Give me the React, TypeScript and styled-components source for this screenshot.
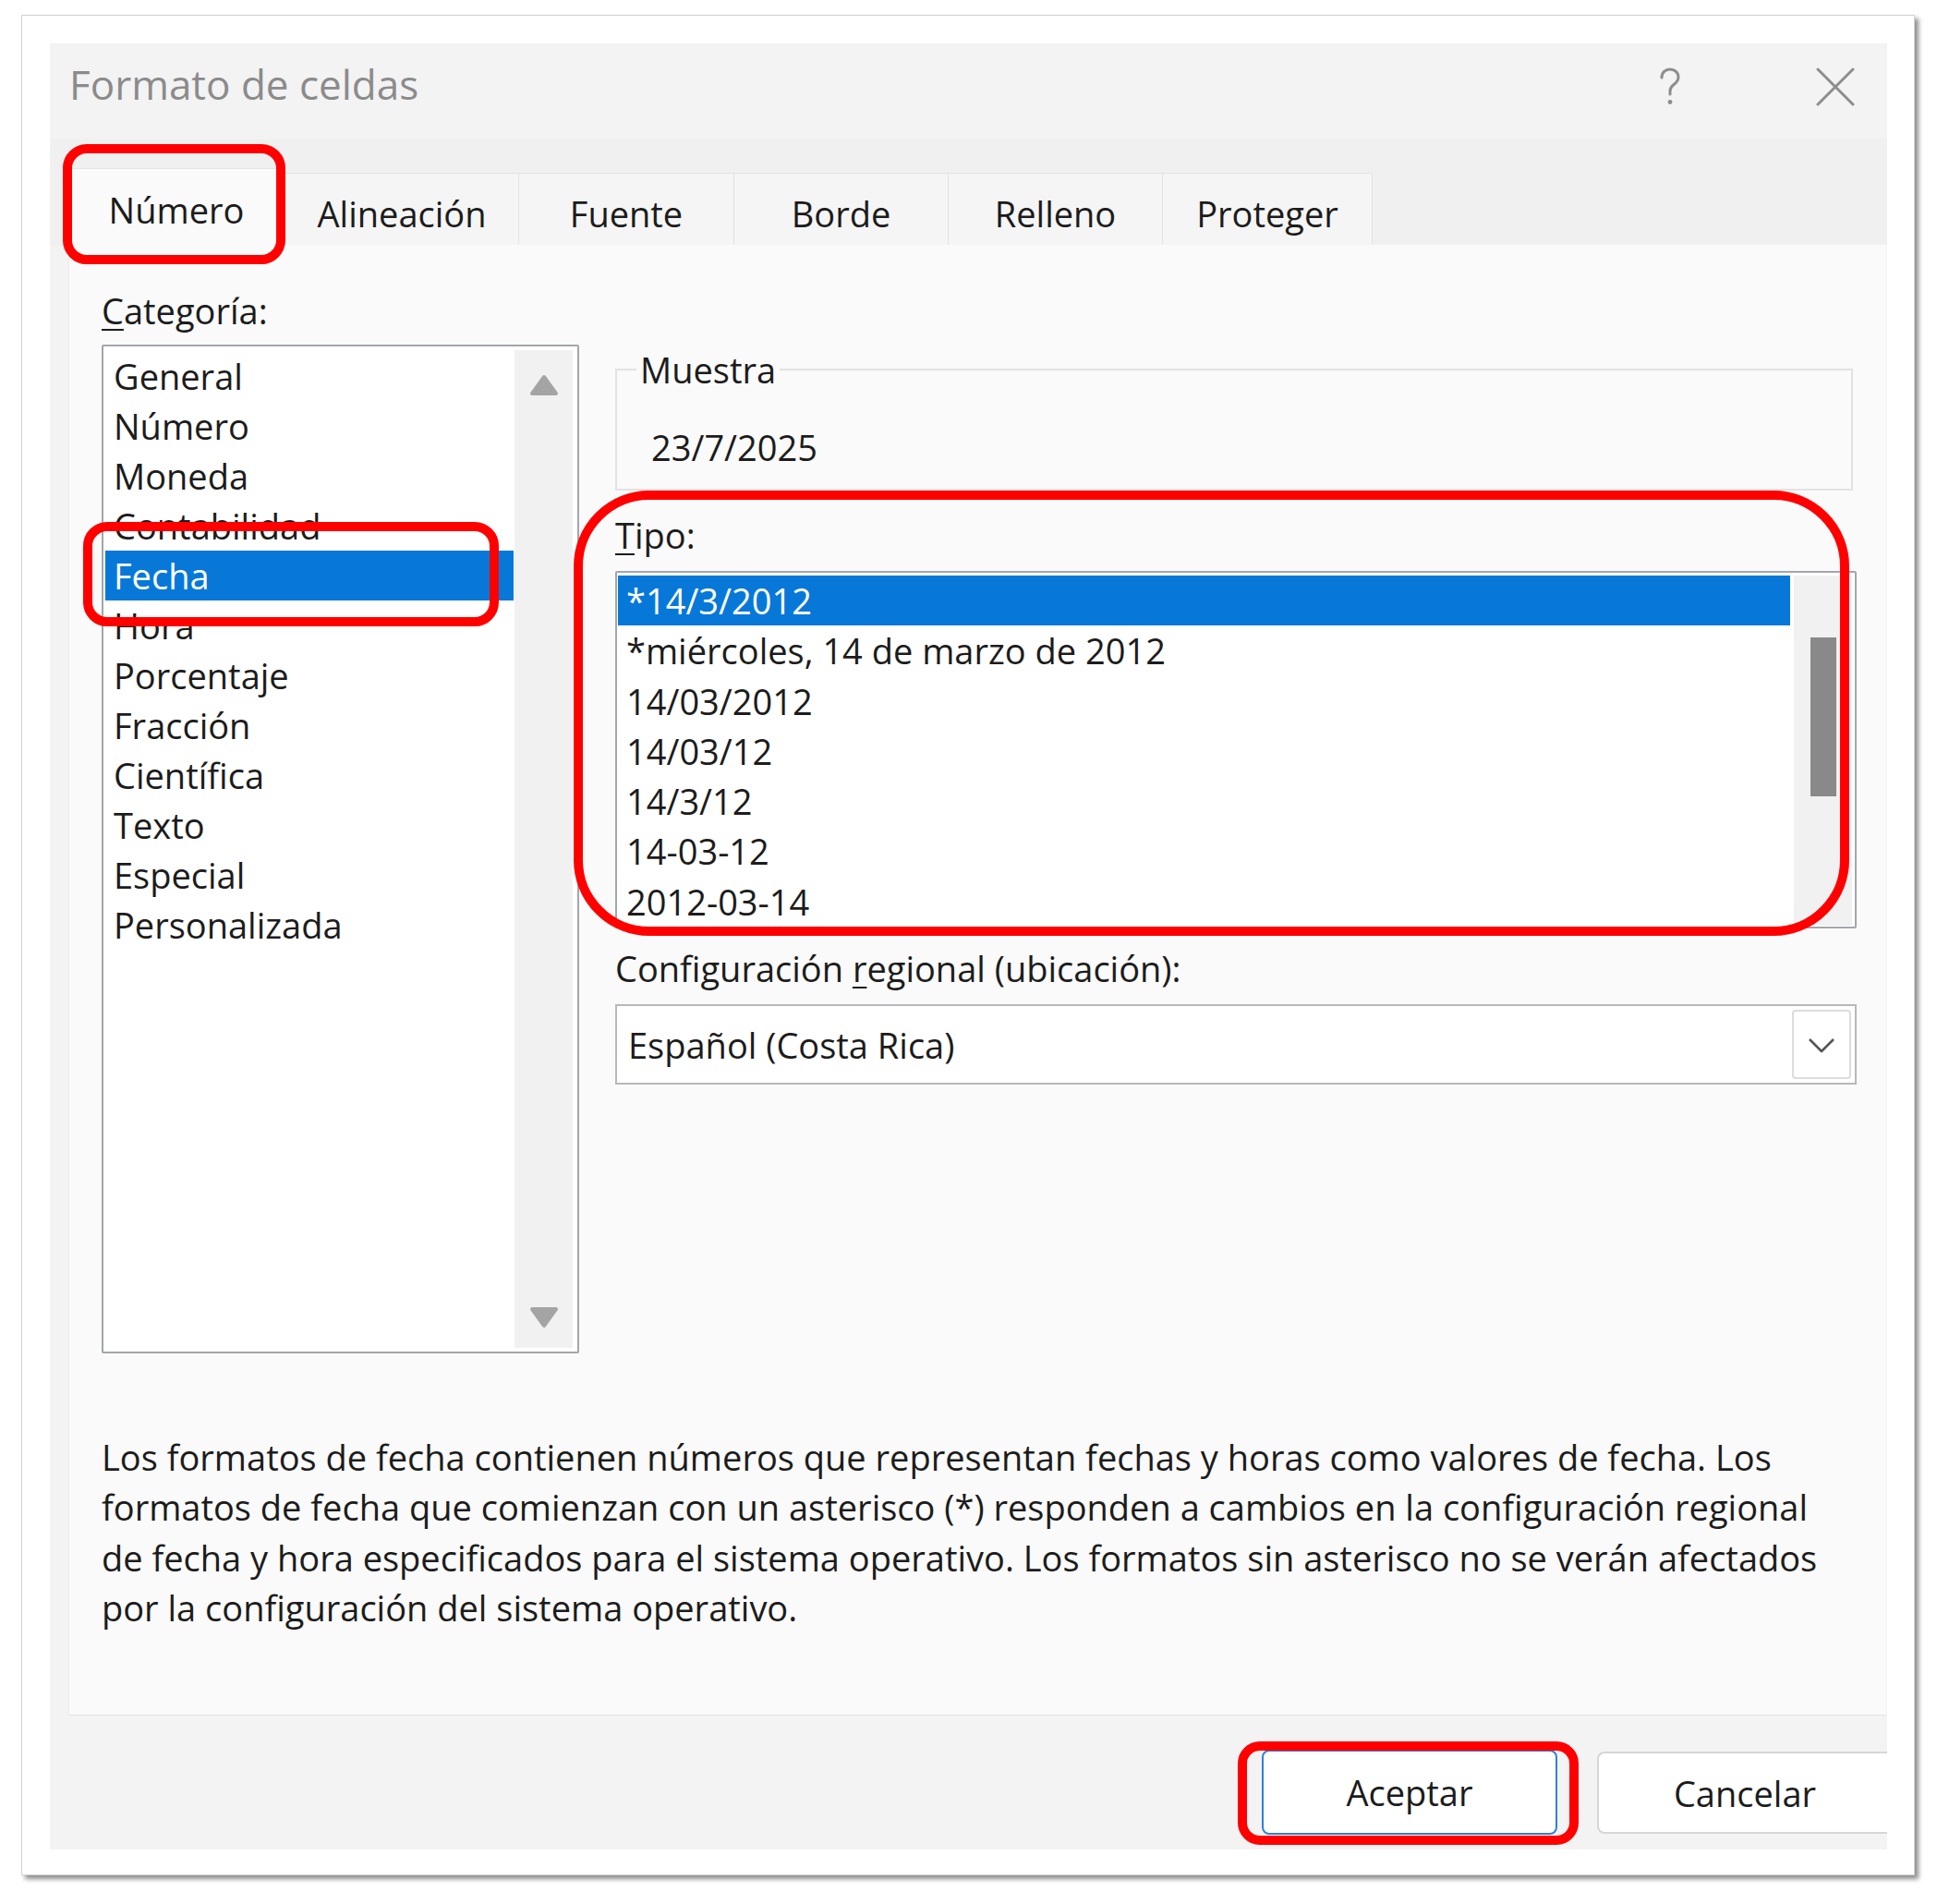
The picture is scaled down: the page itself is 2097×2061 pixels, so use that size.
import React from 'react';
import styled, { createGlobalStyle } from 'styled-components';

const GlobalStyle = createGlobalStyle`
  html, body {
    margin: 0;
    padding: 0;
    background: #ffffff;
  }
  body {
    font-family: 'Open Sans', 'Noto Sans', sans-serif;
    color: #1c1c1c;
  }
  * {
    box-sizing: border-box;
  }
`;

const categories = [
  'General',
  'Número',
  'Moneda',
  'Contabilidad',
  'Fecha',
  'Hora',
  'Porcentaje',
  'Fracción',
  'Científica',
  'Texto',
  'Especial',
  'Personalizada',
];

const dateTypes = [
  '*14/3/2012',
  '*miércoles, 14 de marzo de 2012',
  '14/03/2012',
  '14/03/12',
  '14/3/12',
  '14-03-12',
  '2012-03-14',
];

const tabs = [
  { label: 'Número', width: 236 },
  { label: 'Alineación', width: 254 },
  { label: 'Fuente', width: 234 },
  { label: 'Borde', width: 233 },
  { label: 'Relleno', width: 233 },
  { label: 'Proteger', width: 228 },
];

const App = () => {
  return (
    <>
      <GlobalStyle />
      <Page>
        <Frame>
          <Dialog>
            <TitleBar>
              <Title>Formato de celdas</Title>
              <TitleSpacer />
              <IconButton aria-label="Ayuda">
                <svg width="24" height="42" viewBox="0 0 24 42" fill="none">
                  <path
                    d="M3 11 C3 5.5 7 2 12 2 C17 2 21 5.5 21 10.5 C21 15 18 17 15.5 19 C13 21 12 22.5 12 26 V29"
                    stroke="#8d8d8d"
                    strokeWidth="3"
                    strokeLinecap="round"
                  />
                  <circle cx="12" cy="37.5" r="2.4" fill="#8d8d8d" />
                </svg>
              </IconButton>
              <IconButton aria-label="Cerrar" $gap={146}>
                <svg width="42" height="42" viewBox="0 0 42 42">
                  <path d="M2 2 L40 40 M40 2 L2 40" stroke="#8d8d8d" strokeWidth="3" strokeLinecap="round" />
                </svg>
              </IconButton>
            </TitleBar>

            <TabStrip>
              {tabs.map((t, i) => (
                <Tab key={t.label} $active={i === 0} $width={t.width}>
                  {t.label}
                  {i === 0 && <Mark $top={-27} $right={-1} $bottom={-21} $left={-6} $radius={26} />}
                </Tab>
              ))}
            </TabStrip>

            <Panel>
              <TopGrid>
                <Column>
                  <Label>
                    <Key>C</Key>ategoría:
                  </Label>
                  <ListBox $height={1092} $top={11}>
                    <Items $padTop={5} $padLeft={2}>
                      {categories.map((c) => (
                        <Row key={c} $selected={c === 'Fecha'} $height={54}>
                          {c}
                          {c === 'Fecha' && <Mark $top={-31} $right={16} $bottom={-28} $left={-24} $radius={26} />}
                        </Row>
                      ))}
                    </Items>
                    <Track $margin="4px 5px 4px 1px" $pad="26px 0 21px" $justify="space-between">
                      <svg width="32" height="24" viewBox="0 0 32 24">
                        <polygon points="16,3 29,21 3,21" fill="#a4a4a4" stroke="#a4a4a4" strokeWidth="4" strokeLinejoin="round" />
                      </svg>
                      <svg width="32" height="24" viewBox="0 0 32 24">
                        <polygon points="3,3 29,3 16,21" fill="#a4a4a4" stroke="#a4a4a4" strokeWidth="4" strokeLinejoin="round" />
                      </svg>
                    </Track>
                  </ListBox>
                </Column>

                <Column>
                  <Sample>
                    <SampleLegend>Muestra</SampleLegend>
                    <SampleValue>23/7/2025</SampleValue>
                  </Sample>

                  <TipoGroup>
                    <Label>
                      <Key>T</Key>ipo:
                    </Label>
                    <ListBox $height={387} $top={13}>
                      <Items $padTop={3} $padLeft={1}>
                        {dateTypes.map((d, i) => (
                          <Row key={d} $selected={i === 0} $height={54.3}>
                            {d}
                          </Row>
                        ))}
                      </Items>
                      <Track $margin="3px 3px 1px 4px" $pad="67px 0 0" $justify="flex-start">
                        <Thumb />
                      </Track>
                    </ListBox>
                    <Mark $top={-22} $right={8} $bottom={-8} $left={-45} $radius={82} />
                  </TipoGroup>

                  <Label $top={17}>
                    Configuración <Key>r</Key>egional (ubicación):
                  </Label>
                  <Dropdown>
                    <DropdownValue>Español (Costa Rica)</DropdownValue>
                    <DropdownButton>
                      <svg width="30" height="18" viewBox="0 0 30 18" fill="none">
                        <polyline points="2,2 15,15 28,2" stroke="#555" strokeWidth="2.6" strokeLinejoin="round" />
                      </svg>
                    </DropdownButton>
                  </Dropdown>
                </Column>
              </TopGrid>

              <Description>
                Los formatos de fecha contienen números que representan fechas y horas como valores de fecha. Los
                <br />
                formatos de fecha que comienzan con un asterisco (*) responden a cambios en la configuración regional
                <br />
                de fecha y hora especificados para el sistema operativo. Los formatos sin asterisco no se verán afectados
                <br />
                por la configuración del sistema operativo.
              </Description>
            </Panel>

            <Footer>
              <DialogButton $primary>
                Aceptar
                <Mark $top={-11} $right={-25} $bottom={-13} $left={-28} $radius={24} />
              </DialogButton>
              <DialogButton>Cancelar</DialogButton>
            </Footer>
          </Dialog>
        </Frame>
      </Page>
    </>
  );
};

const Page = styled.div`
  width: 2097px;
  height: 2061px;
  padding: 16px 0 0 23px;
`;

const Frame = styled.div`
  width: 2050px;
  height: 2014px;
  background: #ffffff;
  border: 1px solid #d2d2d2;
  padding: 30px 29px 27px 30px;
  box-shadow: 4px 4px 5px rgba(0, 0, 0, 0.45);
`;

const Dialog = styled.div`
  position: relative;
  width: 100%;
  height: 100%;
  background: #f3f3f3;
  display: flex;
  flex-direction: column;
  overflow: hidden;
`;

const TitleBar = styled.div`
  height: 103px;
  flex: none;
  display: flex;
  align-items: flex-start;
  padding: 22px 35px 0 21px;
`;

const Title = styled.div`
  font-size: 44px;
  line-height: 44px;
  color: #8b8b8b;
`;

const TitleSpacer = styled.div`
  flex: 1;
`;

const IconButton = styled.div<{ $gap?: number }>`
  margin-top: 4px;
  margin-left: ${(p) => p.$gap ?? 0}px;
  display: flex;
  align-items: center;
  justify-content: center;
`;

const TabStrip = styled.div`
  height: 115px;
  flex: none;
  background: #f0f0f0;
  display: flex;
  align-items: flex-end;
  padding-left: 20px;
`;

const Tab = styled.div<{ $active?: boolean; $width: number }>`
  position: relative;
  flex: none;
  height: ${(p) => (p.$active ? 83 : 78)}px;
  width: ${(p) => p.$width}px;
  padding: ${(p) => (p.$active ? 5 : 8)}px 0 0;
  display: flex;
  align-items: center;
  justify-content: center;
  font-size: 38px;
  line-height: 52px;
  white-space: nowrap;
  background: ${(p) => (p.$active ? '#fafafa' : '#f5f5f5')};
  border: 1px solid #e3e3e3;
  border-bottom: none;
  margin-left: -1px;
  z-index: ${(p) => (p.$active ? 2 : 1)};
`;

const Mark = styled.span<{ $top: number; $right: number; $bottom: number; $left: number; $radius: number }>`
  position: absolute;
  top: ${(p) => p.$top}px;
  right: ${(p) => p.$right}px;
  bottom: ${(p) => p.$bottom}px;
  left: ${(p) => p.$left}px;
  border: 10px solid #ff0000;
  border-radius: ${(p) => p.$radius}px;
  pointer-events: none;
  z-index: 10;
`;

const Panel = styled.div`
  flex: 1;
  margin: 0 1px 0 20px;
  background: #fafafa;
  border-bottom: 1px solid #e4e4e4;
  border-left: 1px solid #ececec;
  padding: 45px 32px 0 35px;
`;

const TopGrid = styled.div`
  display: grid;
  grid-template-columns: 517px 1344px;
  column-gap: 39px;
  align-items: start;
`;

const Column = styled.div`
  display: flex;
  flex-direction: column;
`;

const Label = styled.div<{ $top?: number }>`
  margin-top: ${(p) => p.$top ?? 0}px;
  font-size: 38px;
  line-height: 52px;
  height: 52px;
  white-space: nowrap;
`;

const Key = styled.span`
  text-decoration: underline;
  text-decoration-thickness: 2px;
  text-underline-offset: 5px;
`;

const ListBox = styled.div<{ $height: number; $top: number }>`
  margin-top: ${(p) => p.$top}px;
  height: ${(p) => p.$height}px;
  background: #ffffff;
  border: 2px solid #a2a6ad;
  border-radius: 2px;
  display: flex;
`;

const Items = styled.div<{ $padTop: number; $padLeft: number }>`
  flex: 1;
  padding-top: ${(p) => p.$padTop}px;
  padding-left: ${(p) => p.$padLeft}px;
`;

const Row = styled.div<{ $selected?: boolean; $height: number }>`
  position: relative;
  height: ${(p) => p.$height}px;
  line-height: ${(p) => p.$height}px;
  padding-left: 9px;
  font-size: 38px;
  white-space: nowrap;
  background: ${(p) => (p.$selected ? '#0778d8' : 'transparent')};
  color: ${(p) => (p.$selected ? '#ffffff' : '#1c1c1c')};
`;

const Track = styled.div<{ $margin: string; $pad: string; $justify: string }>`
  width: 63px;
  margin: ${(p) => p.$margin};
  padding: ${(p) => p.$pad};
  background: #f1f1f1;
  display: flex;
  flex-direction: column;
  align-items: center;
  justify-content: ${(p) => p.$justify};
`;

const Thumb = styled.div`
  width: 28px;
  height: 172px;
  background: #898989;
`;

const Sample = styled.fieldset`
  margin: 64px 0 0;
  padding: 0 0 19px 37px;
  border: 2px solid #e2e2e2;
  min-width: 0;
  width: 1340px;
`;

const SampleLegend = styled.legend`
  margin-left: -16px;
  padding: 0 4px;
  font-size: 38px;
  line-height: 52px;
`;

const SampleValue = styled.div`
  margin-top: 32px;
  font-size: 38px;
  line-height: 52px;
`;

const TipoGroup = styled.div`
  position: relative;
  margin-top: 22px;
  display: flex;
  flex-direction: column;
`;

const Dropdown = styled.div`
  margin-top: 13px;
  height: 87px;
  background: #ffffff;
  border: 2px solid #b7b7bd;
  display: flex;
  align-items: center;
  padding: 0 4px 0 12px;
`;

const DropdownValue = styled.div`
  flex: 1;
  font-size: 38px;
  line-height: 52px;
`;

const DropdownButton = styled.div`
  width: 64px;
  height: 75px;
  border: 2px solid #dcdcdc;
  border-radius: 4px;
  display: flex;
  align-items: center;
  justify-content: center;
  padding-top: 2px;
`;

const Description = styled.p`
  margin: 85px 0 0;
  font-size: 38px;
  line-height: 54.4px;
  white-space: nowrap;
`;

const Footer = styled.div`
  height: 145px;
  flex: none;
  display: flex;
  align-items: flex-start;
  justify-content: flex-end;
  gap: 43px;
  padding-top: 37px;
  margin-right: -6px;
`;

const DialogButton = styled.div<{ $primary?: boolean }>`
  position: relative;
  width: 320px;
  height: ${(p) => (p.$primary ? 92 : 89)}px;
  margin-top: ${(p) => (p.$primary ? 0 : 2)}px;
  background: #ffffff;
  border: 2px solid ${(p) => (p.$primary ? '#2f81d6' : '#d6d6d6')};
  border-radius: 8px;
  display: flex;
  align-items: center;
  justify-content: center;
  font-size: 38px;
`;

export default App;
